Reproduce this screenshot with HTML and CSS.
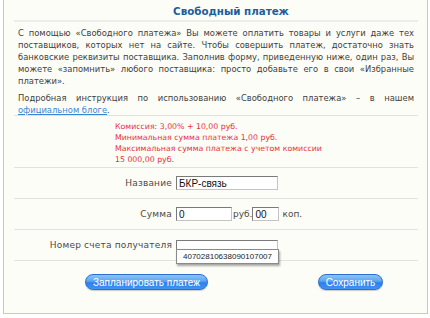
FILE: index.html
```html
<!DOCTYPE html>
<html lang="ru">
<head>
    <meta charset="UTF-8">
    <title>Свободный платеж</title>
    <link rel="stylesheet" href="styles.css">
</head>
<body>
    <div class="panel">
        <h1>Свободный платеж</h1>

        <div class="intro">
            <p>С помощью «Свободного платежа» Вы можете оплатить товары и услуги даже тех поставщиков, которых нет на сайте. Чтобы совершить платеж, достаточно знать банковские реквизиты поставщика. Заполнив форму, приведенную ниже, один раз, Вы можете «запомнить» любого поставщика: просто добавьте его в свои «Избранные платежи».</p>
            <p>Подробная инструкция по использованию «Свободного платежа» – в нашем <a href="#">официальном блоге</a>.</p>
        </div>

        <div class="notes">
            <div>Комиссия: 3,00% + 10,00 руб.</div>
            <div>Минимальная сумма платежа 1,00 руб.</div>
            <div>Максимальная сумма платежа с учетом комиссии</div>
            <div>15 000,00 руб.</div>
        </div>

        <div class="row">
            <label class="label">Название</label>
            <input class="field" type="text" value="БКР-связь">
        </div>

        <div class="row">
            <label class="label">Сумма</label>
            <input class="field field-rub" type="text" value="0">
            <span class="unit">руб.</span>
            <input class="field field-kop" type="text" value="00">
            <span class="unit unit-kop">коп.</span>
        </div>

        <div class="row">
            <label class="label">Номер счета получателя</label>
            <div class="suggest-wrap">
                <input class="field" type="text" value="">
                <div class="suggest">40702810638090107007</div>
            </div>
        </div>

        <div class="actions">
            <button class="btn btn-plan">Запланировать платеж</button>
            <button class="btn btn-save">Сохранить</button>
        </div>
    </div>
</body>
</html>
```

FILE: styles.css
```css
body {
    margin: 0;
    background: #ffffff;
    font-family: "DejaVu Sans", Verdana, sans-serif;
    color: #3a3a3a;
}

.panel {
    margin: 0 2px 0 3px;
    height: 314px;
    box-sizing: border-box;
    padding: 0 9px 0 10px;
    background: #fdfdf8;
    border: 1px solid #c9c9c0;
    border-top: none;
}

h1 {
    margin: 0;
    height: 20px;
    padding-left: 30px;
    line-height: 22px;
    text-align: center;
    font-size: 10.3px;
    font-weight: bold;
    color: #1d5e9c;
    border-bottom: 2px solid #ececea;
}

.intro {
    padding: 5px 4px 0;
    height: 88px;
    font-size: 8.4px;
    line-height: 12px;
    text-align: justify;
    color: #404040;
    border-bottom: 1px solid #e2e2e2;
}

.intro p {
    margin: 0 0 5px;
}

.intro p:last-child {
    margin-bottom: 0;
}

.intro a {
    color: #3a86d0;
}

.notes {
    height: 46px;
    padding: 5px 0 0 101px;
    font-size: 7.8px;
    line-height: 11px;
    color: #e8303a;
    border-bottom: 1px solid #e2e2e2;
}

.row {
    display: flex;
    align-items: center;
    height: 30px;
    border-bottom: 1px solid #e2e2e2;
}

.label {
    width: 158px;
    padding-right: 4px;
    text-align: right;
    font-size: 9px;
    letter-spacing: 0.2px;
    color: #4a4a4a;
}

.field {
    width: 102px;
    height: 14px;
    box-sizing: border-box;
    margin: 0;
    padding: 0 2px;
    border: 1px solid #7a7a7a;
    border-right-color: #c4c4c4;
    border-bottom-color: #c4c4c4;
    background: #ffffff;
    font-family: "Liberation Sans", Arial, sans-serif;
    font-size: 10px;
    color: #111;
}

.field-rub {
    width: 56px;
}

.field-kop {
    width: 27px;
}

.unit {
    font-size: 9px;
    color: #4a4a4a;
    padding-left: 1px;
}

.unit-kop {
    padding-left: 3px;
}

.suggest-wrap {
    position: relative;
}

.suggest {
    position: absolute;
    left: 0;
    top: 13px;
    width: 103px;
    box-sizing: border-box;
    padding: 1px 0 1px 6px;
    background: #ffffff;
    border: 1px solid #8a8a8a;
    box-shadow: 1px 2px 2px rgba(0, 0, 0, 0.35);
    font-family: "Liberation Sans", Arial, sans-serif;
    font-size: 8px;
    line-height: 11px;
    color: #222;
}

.actions {
    display: flex;
    padding: 13px 0 0;
}

.btn {
    height: 16px;
    padding: 0 6px;
    border: 1px solid #2c6fcf;
    border-radius: 8px;
    background: linear-gradient(#8cc4f8 0%, #5aa3f2 45%, #2f7fe8 55%, #4393f2 100%);
    color: #ffffff;
    font-family: "Liberation Sans", Arial, sans-serif;
    font-size: 10px;
    white-space: nowrap;
    box-shadow: 0 1px 1px rgba(0, 0, 0, 0.2);
}

.btn-plan {
    margin-left: 71px;
    width: 123px;
}

.btn-save {
    margin-left: 110px;
    width: 65px;
}
```
